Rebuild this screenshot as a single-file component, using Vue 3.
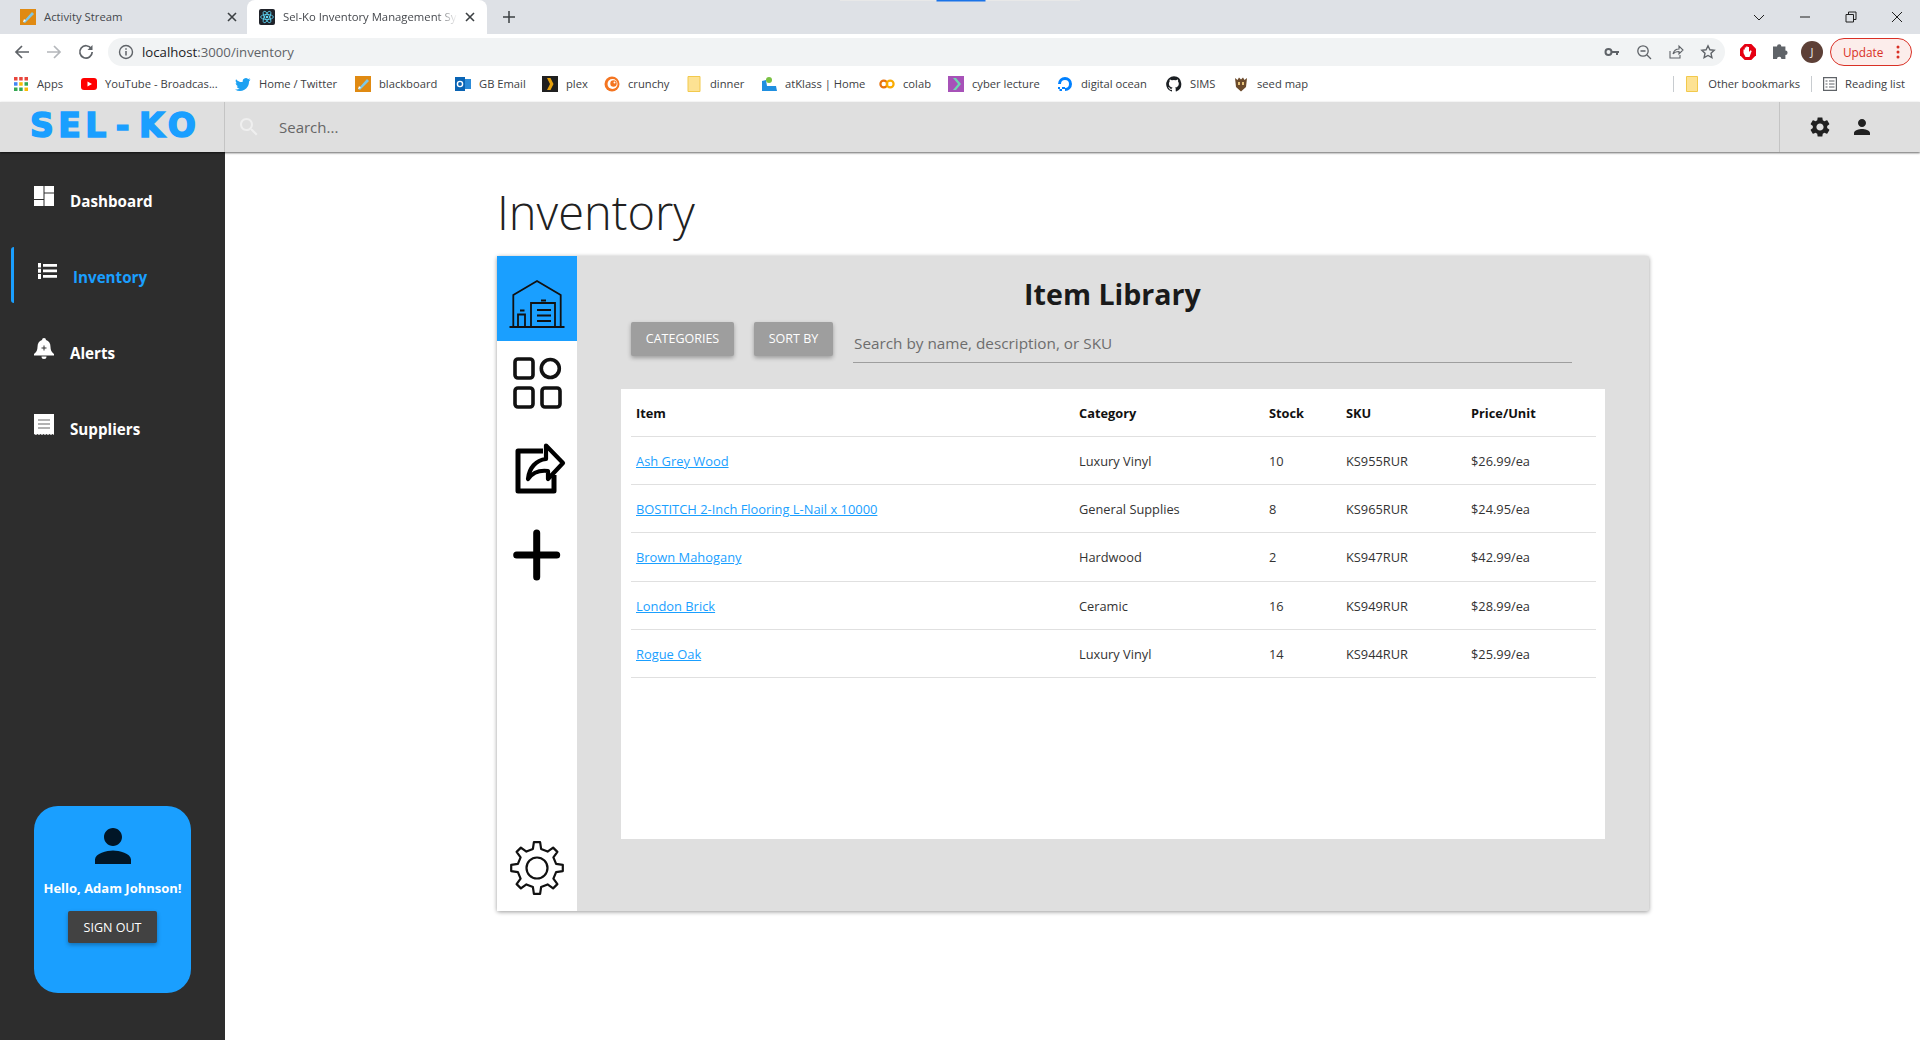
<template>
  <div class="page">
    <!-- browser chrome -->
    <div class="tabstrip">
      <div class="load-track"><div class="load-bar"></div></div>
      <div class="tab">
        <svg class="fav" viewBox="0 0 16 16"><rect width="16" height="16" fill="#e08a12"/><path d="M3 13 12 3l2 2-9 9z" fill="#7ec8e8"/><path d="M3 13l1-3 2 2z" fill="#fff"/></svg>
        <span class="tab-title">Activity Stream</span>
        <svg class="tab-x" viewBox="0 0 10 10"><path d="M1 1l8 8M9 1l-8 8"/></svg>
      </div>
      <div class="tab active">
        <svg class="fav" viewBox="0 0 16 16"><rect width="16" height="16" rx="2" fill="#20232a"/><g fill="none" stroke="#61dafb" stroke-width=".8"><ellipse cx="8" cy="8" rx="6.4" ry="2.5"/><ellipse cx="8" cy="8" rx="6.4" ry="2.5" transform="rotate(60 8 8)"/><ellipse cx="8" cy="8" rx="6.4" ry="2.5" transform="rotate(120 8 8)"/></g><circle cx="8" cy="8" r="1.3" fill="#61dafb"/></svg>
        <span class="tab-title fade">Sel-Ko Inventory Management Sy</span>
        <svg class="tab-x" viewBox="0 0 10 10"><path d="M1 1l8 8M9 1l-8 8"/></svg>
      </div>
      <svg class="newtab" viewBox="0 0 12 12"><path d="M6 0v12M0 6h12"/></svg>
      <div class="winctl">
        <svg viewBox="0 0 12 12" width="12" height="12"><path d="M1 4l5 5 5-5"/></svg>
        <svg viewBox="0 0 12 12" width="12" height="12"><path d="M1 6h10"/></svg>
        <svg viewBox="0 0 12 12" width="12" height="12"><path d="M1 3.5h7.5V11H1zM3.5 3.500V1H11v7.500H8.500"/></svg>
        <svg viewBox="0 0 12 12" width="12" height="12"><path d="M1 1l10 10M11 1 1 11"/></svg>
      </div>
    </div>
    <div class="toolbar">
      <svg class="nav-ic" viewBox="0 0 16 16"><path d="M15 8H2M8 2 2 8l6 6" fill="none" stroke="#5f6368" stroke-width="1.700"/></svg>
      <svg class="nav-ic" viewBox="0 0 16 16"><path d="M1 8h13M8 2l6 6-6 6" fill="none" stroke="#b4b7bb" stroke-width="1.700"/></svg>
      <svg class="nav-ic" viewBox="0 0 16 16"><path d="M13.300 4.700A6.200 6.200 0 1 0 14.200 8" fill="none" stroke="#5f6368" stroke-width="1.700"/><path d="M14.500 1v5h-5z" fill="#5f6368"/></svg>
      <div class="omnibox">
        <svg class="info" viewBox="0 0 16 16"><circle cx="8" cy="8" r="6.500" fill="none" stroke="#5f6368" stroke-width="1.400"/><path d="M8 7v4.500M8 4.300v1.500" stroke="#5f6368" stroke-width="1.500"/></svg>
        <span class="url"><b>localhost</b>:3000/inventory</span>
        <div class="omni-icons">
          <svg viewBox="0 0 16 16"><circle cx="4.500" cy="8" r="3" fill="none" stroke="#5f6368" stroke-width="2"/><path d="M7 7h8v2h-1v2h-2V9H7z" fill="#5f6368"/></svg>
          <svg viewBox="0 0 16 16"><circle cx="7" cy="7" r="5.200" fill="none" stroke="#5f6368" stroke-width="1.300"/><path d="M4.500 7h5M11 11l4 4" stroke="#5f6368" stroke-width="1.300"/></svg>
          <svg viewBox="0 0 16 16"><path d="M2 7v7h10v-3M5 10c1-4 4-5 6-5V2l4 4-4 4V7.500C8 7.500 6.500 8 5 10z" fill="none" stroke="#5f6368" stroke-width="1.100"/></svg>
          <svg viewBox="0 0 16 16"><path d="m8 1.800 1.900 4 4.300.5-3.200 3 .9 4.300L8 11.500l-3.900 2.100.9-4.300-3.200-3 4.300-.5z" fill="none" stroke="#5f6368" stroke-width="1.400"/></svg>
        </div>
      </div>
      <div class="ext-icons">
        <svg viewBox="0 0 18 18"><path d="M5.700 1h6.600L17 5.700v6.600L12.300 17H5.700L1 12.300V5.700z" fill="#e60012"/><path d="M4.500 10V6.500h1.300v2.500V4.500h1.400V8V3.500h1.400V8V4h1.400v5l1.500-1.800 1.200.7-2.200 6.100H6.500z" fill="#fff"/></svg>
        <svg viewBox="0 0 18 18"><path d="M1 5h4a2.200 2.200 0 0 1 4.400 0h4v4a2.200 2.200 0 0 1 0 4.400v4h-4a2.200 2.200 0 0 0-4.400 0H1z" fill="#5f6368" transform="translate(1 -1.500)"/></svg>
        <div class="avatar">J</div>
      </div>
      <div class="update">
        <span>Update</span>
        <svg viewBox="0 0 4 16" width="4" height="16"><circle cx="2" cy="3" r="1.500"/><circle cx="2" cy="8" r="1.500"/><circle cx="2" cy="13" r="1.500"/></svg>
      </div>
    </div>
    <div class="bookmarks">
      <div v-for="b in bookmarks" :key="b.name" class="bm" :style="{ width: b.w + 'px' }">
        <svg class="bm-ic" viewBox="0 0 16 16" v-html="b.icon"></svg>
        <span>{{ b.name }}</span>
      </div>
      <div class="bm-right">
        <i class="sep"></i>
        <svg class="bm-ic small" viewBox="0 0 12 16"><path d="M.5.500h11v15H.5z" fill="#fde293" stroke="#f2c94c"/></svg>
        <span class="other">Other bookmarks</span>
        <i class="sep"></i>
        <svg class="bm-ic list" viewBox="0 0 14 14"><path d="M.6.600h12.800v12.800H.6zM2.500 4h2M6 4h5.500M2.500 7h2M6 7h5.500M2.500 10h2M6 10h5.500" fill="none" stroke="#5f6368" stroke-width="1.200"/></svg>
        <span>Reading list</span>
      </div>
    </div>

    <!-- app bar -->
    <header class="appbar">
      <div class="logo">SEL<span class="dash">-</span>KO</div>
      <div class="searchbar">
        <svg viewBox="0 0 24 24" width="24" height="24"><path fill="#efefef" :d="searchPath"/></svg>
        <span>Search...</span>
      </div>
      <div class="bar-actions">
        <svg viewBox="0 0 24 24" width="24" height="24"><path fill="#212121" :d="gearPath"/></svg>
        <svg viewBox="0 0 24 24" width="24" height="24"><path fill="#212121" :d="personPath"/></svg>
      </div>
    </header>

    <div class="body">
      <aside class="sidebar">
        <nav class="nav">
          <a v-for="n in navItems" :key="n.label" class="nav-item" :class="{ on: n.active }">
            <svg class="nav-svg" viewBox="0 0 20 22" v-html="n.icon"></svg>
            <span>{{ n.label }}</span>
          </a>
        </nav>
        <div class="profile">
          <svg viewBox="0 0 24 24" width="54" height="54"><path fill="#011627" :d="personPath"/></svg>
          <div class="hello">Hello, Adam Johnson!</div>
          <button class="signout">SIGN OUT</button>
        </div>
      </aside>

      <main class="main">
        <h1 class="title">Inventory</h1>
        <section class="panel">
          <div class="rail">
            <div class="rail-item current">
              <svg viewBox="0 0 80 85" fill="none" stroke="#111" stroke-width="1.800">
                <path d="M16.300 71V39L40 25l23.700 14v32M12.500 71h55M34 71V47h24v24M21 71V58.500h7V71M40 54h14M40 59.500h14M40 65h14"/>
                <path d="M23 54.500h4.500M44 44.500h5" stroke-width="2"/>
              </svg>
            </div>
            <div class="rail-item">
              <svg viewBox="0 0 80 85" fill="none" stroke="#111" stroke-width="3.600">
                <rect x="18" y="18" width="18" height="19" rx="3"/>
                <circle cx="53.300" cy="27.500" r="9"/>
                <rect x="18" y="47" width="18" height="19" rx="3"/>
                <rect x="45" y="47" width="18" height="19" rx="3"/>
              </svg>
            </div>
            <div class="rail-item">
              <svg viewBox="0 2 80 85" fill="none" stroke="#000" stroke-linejoin="round">
                <path d="M46 27H21v40h36V51" stroke-width="5"/>
                <path d="M49 21.500 66 39 51 55V47c-8-1-15 1-20 8 1-11 8-19 18-20z" stroke-width="4.200" fill="#fff"/>
              </svg>
            </div>
            <div class="rail-item">
              <svg viewBox="0 0 80 85" stroke="#000" stroke-width="7" stroke-linecap="round"><path d="M39.700 22v44M19.700 44h40"/></svg>
            </div>
            <div class="rail-gear">
              <svg viewBox="0 0 60 60" width="60" height="60" fill="none" stroke="#111" stroke-width="2.200" stroke-linejoin="round">
                <path :d="railGear"/>
                <circle cx="30" cy="30" r="10.500"/>
              </svg>
            </div>
          </div>
          <div class="content">
            <h2 class="lib-title">Item Library</h2>
            <div class="filters">
              <button class="filter wide">CATEGORIES</button>
              <button class="filter">SORT BY</button>
              <div class="find">Search by name, description, or SKU</div>
            </div>
            <div class="sheet">
              <table>
                <colgroup><col class="c1"><col class="c2"><col class="c3"><col class="c4"><col class="c5"></colgroup>
                <thead>
                  <tr><th>Item</th><th>Category</th><th>Stock</th><th>SKU</th><th>Price/Unit</th></tr>
                </thead>
                <tbody>
                  <tr v-for="r in rows" :key="r.sku">
                    <td><a class="link">{{ r.name }}</a></td>
                    <td>{{ r.cat }}</td>
                    <td>{{ r.stock }}</td>
                    <td>{{ r.sku }}</td>
                    <td>{{ r.price }}</td>
                  </tr>
                </tbody>
              </table>
            </div>
          </div>
        </section>
      </main>
    </div>
  </div>
</template>

<script setup>
const searchPath = 'M15.5 14h-.79l-.28-.27C15.41 12.59 16 11.11 16 9.5 16 5.91 13.09 3 9.5 3S3 5.91 3 9.5 5.91 16 9.5 16c1.61 0 3.09-.59 4.23-1.57l.27.28v.79l5 4.99L20.49 19l-4.99-5zm-6 0C7.01 14 5 11.99 5 9.5S7.01 5 9.5 5 14 7.01 14 9.5 11.99 14 9.5 14z'
const gearPath = 'M19.14 12.94c.04-.3.06-.61.06-.94 0-.32-.02-.64-.07-.94l2.03-1.58c.18-.14.23-.41.12-.61l-1.92-3.32c-.12-.22-.37-.29-.59-.22l-2.39.96c-.5-.38-1.03-.7-1.62-.94l-.36-2.54c-.04-.24-.24-.41-.48-.41h-3.84c-.24 0-.43.17-.47.41l-.36 2.54c-.59.24-1.13.57-1.62.94l-2.39-.96c-.22-.08-.47 0-.59.22L2.74 8.87c-.12.21-.08.47.12.61l2.03 1.58c-.05.3-.09.63-.09.94s.02.64.07.94l-2.03 1.58c-.18.14-.23.41-.12.61l1.92 3.32c.12.22.37.29.59.22l2.39-.96c.5.38 1.03.7 1.62.94l.36 2.54c.05.24.24.41.48.41h3.84c.24 0 .44-.17.47-.41l.36-2.54c.59-.24 1.13-.56 1.62-.94l2.39.96c.22.08.47 0 .59-.22l1.92-3.32c.12-.22.07-.47-.12-.61l-2.01-1.58zM12 15.6c-1.98 0-3.6-1.62-3.6-3.6s1.62-3.6 3.6-3.6 3.6 1.62 3.6 3.6-1.62 3.6-3.6 3.6z'
const personPath = 'M12 12c2.21 0 4-1.79 4-4s-1.790-4-4-4-4 1.790-4 4 1.790 4 4 4zm0 2c-2.670 0-8 1.340-8 4v2h16v-2c0-2.660-5.330-4-8-4z'

// outline gear for the bottom of the rail, 8 teeth
function makeGear(cx, cy, outer, root, teeth) {
  const pts = []
  const step = (Math.PI * 2) / teeth
  for (let i = 0; i < teeth; i++) {
    const a = i * step - Math.PI / 2
    const p = (r, d) => {
      const x = cx + r * Math.cos(a + d * step)
      const y = cy + r * Math.sin(a + d * step)
      return x.toFixed(1) + ' ' + y.toFixed(1)
    }
    pts.push(p(root, -0.27), p(outer, -0.15), p(outer, 0.15), p(root, 0.27))
  }
  return 'M' + pts.join('L') + 'Z'
}
const railGear = makeGear(30, 30, 26, 19.5, 8)

const folder = '<path d="M2 .5h12v15H2z" fill="#fde293" stroke="#f2c94c"/>'
const pencil = '<rect width="16" height="16" fill="#e08a12"/><path d="M3 13 12 3l2 2-9 9z" fill="#7ec8e8"/><path d="M3 13l1-3 2 2z" fill="#fff"/>'
const bookmarks = [
  { name: 'Apps', w: 68, icon: '<g fill="#e8453c"><rect x="1" y="1" width="3.500" height="3.500"/><rect x="6.200" y="1" width="3.500" height="3.500"/><rect x="11.500" y="1" width="3.500" height="3.500"/></g><g fill="#4285f4"><rect x="1" y="6.200" width="3.500" height="3.500"/></g><g fill="#fbbc05"><rect x="6.200" y="6.200" width="3.500" height="3.500"/><rect x="11.500" y="11.500" width="3.500" height="3.500"/></g><g fill="#34a853"><rect x="11.500" y="6.200" width="3.500" height="3.500"/><rect x="1" y="11.500" width="3.500" height="3.500"/><rect x="6.200" y="11.500" width="3.500" height="3.500"/></g>' },
  { name: 'YouTube - Broadcas...', w: 154, icon: '<rect y="2" width="16" height="12" rx="3" fill="#f00"/><path d="M6.500 5.500 11 8l-4.500 2.500z" fill="#fff"/>' },
  { name: 'Home / Twitter', w: 120, icon: '<path d="M15.500 3.500c-.6.300-1.200.400-1.800.5.600-.400 1.100-1 1.400-1.700-.6.400-1.300.600-2 .8a3.200 3.200 0 0 0-5.400 2.900C5 6.400 2.700 5.100 1.100 3.200c-.9 1.500-.4 3.300 1 4.300-.5 0-1-.2-1.400-.4 0 1.500 1.100 2.900 2.600 3.200-.5.100-1 .200-1.500.100.400 1.300 1.600 2.200 3 2.200A6.500 6.500 0 0 1 0 13.400 9 9 0 0 0 14 5.500c.6-.5 1.100-1.200 1.500-2z" fill="#1da1f2"/>' },
  { name: 'blackboard', w: 100, icon: pencil },
  { name: 'GB Email', w: 87, icon: '<rect x="5" y="3" width="11" height="10" fill="#2c8bd8"/><rect y="1" width="10" height="14" fill="#0a64b4"/><circle cx="5" cy="8" r="2.600" fill="none" stroke="#fff" stroke-width="1.400"/>' },
  { name: 'plex', w: 62, icon: '<rect width="16" height="16" fill="#1f1f1f"/><path d="M5 2h3.500l3 6-3 6H5l3-6z" fill="#e5a00d"/>' },
  { name: 'crunchy', w: 82, icon: '<circle cx="8" cy="8" r="7.500" fill="#f47521"/><circle cx="8.500" cy="8" r="5" fill="#fff"/><circle cx="9.500" cy="7.500" r="3.200" fill="#f47521"/><circle cx="10.500" cy="6.500" r="1" fill="#fff"/>' },
  { name: 'dinner', w: 75, icon: folder },
  { name: 'atKlass | Home', w: 118, icon: '<path d="M1 15V5l4-1 1 6h9l1 5z" fill="#1f8fe0"/><circle cx="8" cy="4" r="3" fill="#7ac143"/>' },
  { name: 'colab', w: 69, icon: '<circle cx="4.800" cy="8" r="3.400" fill="none" stroke="#e8710a" stroke-width="2.200"/><circle cx="11.200" cy="8" r="3.400" fill="none" stroke="#f9ab00" stroke-width="2.200"/>' },
  { name: 'cyber lecture', w: 109, icon: '<rect width="16" height="16" fill="#a752b8"/><path d="M5 2l5 6-5 6h3l5-6-5-6z" fill="#6fd6b0"/>' },
  { name: 'digital ocean', w: 109, icon: '<path d="M8 15V12a4 4 0 1 0-4-4H1a7 7 0 1 1 7 7z" fill="#0080ff"/><path d="M5 11h3v2H5zM2.500 13H5v2H2.500zM1 11h2v2H1z" fill="#0080ff"/>' },
  { name: 'SIMS', w: 67, icon: '<path d="M8 .3a7.800 7.800 0 0 0-2.500 15.200c.4.100.5-.2.500-.4v-1.300c-2.200.5-2.700-1-2.700-1-.4-.9-.9-1.200-.9-1.200-.7-.5.100-.5.100-.5.800.1 1.200.8 1.200.8.700 1.200 1.800.9 2.300.7 0-.5.300-.9.500-1.100-1.700-.2-3.600-.9-3.600-3.900 0-.8.300-1.500.8-2-.1-.2-.3-1 .1-2.100 0 0 .6-.2 2.100.8a7.500 7.500 0 0 1 3.900 0c1.500-1 2.100-.8 2.100-.8.400 1.100.2 1.900.1 2.100.5.5.8 1.200.8 2 0 3-1.800 3.700-3.600 3.900.3.300.5.700.5 1.400v2.100c0 .2.100.5.500.4A7.800 7.800 0 0 0 8 .3z" fill="#1b1f23"/>' },
  { name: 'seed map', w: 90, icon: '<path d="M2 2l2.500 2L6 1.500 8 3.500l2-2L11.500 4 14 2l-1 9-5 4.500L3 11z" fill="#6b4a2b"/><path d="M5 6h2v3H5zM9 6h2v3H9z" fill="#e6c27a"/>' }
]

const navItems = [
  { label: 'Dashboard', icon: '<path fill="#fff" d="M0 0h9.500v13H0zM0 14h9.500v6H0zM10.500 0H20v6.500h-9.500zM10.500 7.500H20V20h-9.500z"/>' },
  { label: 'Inventory', active: true, icon: '<path fill="#fff" d="M1 1h3v4.500H1zM1 6.800h3v4H1zM1 12h3v5H1zM6 2h14v2.800H6zM6 7.500h14v2.800H6zM6 13h14v2.800H6z"/>' },
  { label: 'Alerts', icon: '<path fill="#fff" d="M10 0a2 2 0 0 1 2 2c3 1 4.500 3.500 4.500 7 0 3 1 5 3.500 7v1.500H0V16c2.500-2 3.500-4 3.500-7 0-3.500 1.500-6 4.500-7a2 2 0 0 1 2-2zM7.500 18.500h5a2.500 2.500 0 0 1-5 0z"/><path d="M10 7.500v5M7.500 10h5" stroke="#333" stroke-width="1"/>' },
  { label: 'Suppliers', icon: '<path fill="#fff" d="M0 0h20v21l-1.500-1-1.500 1-1.500-1-1.500 1-1.500-1-1.500 1-1.500-1L8 21l-1.500-1L5 21l-1.500-1L2 21l-2-1z"/><path d="M4 6h12M4 10h12M4 14h12" stroke="#666" stroke-width="1.200"/>' }
]

const rows = [
  { name: 'Ash Grey Wood', cat: 'Luxury Vinyl', stock: 10, sku: 'KS955RUR', price: '$26.99/ea' },
  { name: 'BOSTITCH 2-Inch Flooring L-Nail x 10000', cat: 'General Supplies', stock: 8, sku: 'KS965RUR', price: '$24.95/ea' },
  { name: 'Brown Mahogany', cat: 'Hardwood', stock: 2, sku: 'KS947RUR', price: '$42.99/ea' },
  { name: 'London Brick', cat: 'Ceramic', stock: 16, sku: 'KS949RUR', price: '$28.99/ea' },
  { name: 'Rogue Oak', cat: 'Luxury Vinyl', stock: 14, sku: 'KS944RUR', price: '$25.99/ea' }
]
</script>

<style>
html, body { margin: 0; height: 100%; overflow: hidden; background: #fff; }
</style>

<style scoped>
.page {
  width: 1920px;
  height: 1040px;
  display: flex;
  flex-direction: column;
  font-family: "Open Sans", "Noto Sans", sans-serif;
  color: #212121;
  overflow: hidden;
}

/* chrome */
.tabstrip {
  height: 34px;
  flex: none;
  background: #dee1e6;
  display: flex;
  align-items: stretch;
  position: relative;
  font-size: 12px;
  color: #45484d;
}
.load-track { position: absolute; top: 0; left: 840px; width: 240px; height: 1px; background: #e8e8e8; }
.load-bar { width: 48px; height: 1px; margin-left: 97px; background: #1a73e8; box-shadow: 0 0 0 .5px #1a73e8; }
.tab {
  width: 240px;
  margin-left: 7px;
  padding-left: 13px;
  box-sizing: border-box;
  display: flex;
  align-items: center;
}
.tab .tab-x { margin-right: 10px; }
.tab.active { background: #fff; border-radius: 8px 8px 0 0; margin-left: 0; padding-left: 12px; }
.tab.active .tab-x { margin-right: 12px; }
.tab-title { width: 178px; margin-left: 8px; white-space: nowrap; font-size: 11.300px; padding-bottom: 1px; }
.fade { -webkit-mask-image: linear-gradient(90deg, #000 86%, transparent 98%); mask-image: linear-gradient(90deg, #000 86%, transparent 98%); }
.fav { width: 16px; height: 16px; flex: none; }
.tab-x { width: 10px; height: 10px; margin-left: auto; fill: none; stroke: #3c4043; stroke-width: 1.600; }
.newtab { width: 12px; height: 12px; align-self: center; margin-left: 16px; fill: none; stroke: #3c4043; stroke-width: 1.500; }
.winctl { margin-left: auto; display: flex; align-items: center; gap: 34px; padding-right: 17px; }
.winctl svg { fill: none; stroke: #1f1f1f; stroke-width: 1; }

.toolbar {
  height: 32px;
  flex: none;
  background: #fff;
  display: flex;
  align-items: flex-start;
  padding: 4px 8px 0 14px;
  box-sizing: border-box;
}
.nav-ic { width: 16px; height: 16px; margin: 6px 16px 0 0; flex: none; }
.omnibox {
  width: 1617px;
  height: 28px;
  margin-left: -2px;
  background: #f1f3f4;
  border-radius: 14px;
  display: flex;
  align-items: center;
  flex: none;
  font-size: 13.200px;
  color: #5f6368;
}
.info { width: 16px; height: 16px; margin: 0 8px 0 10px; }
.url { white-space: nowrap; }
.url b { font-weight: 400; color: #202124; }
.omni-icons { margin-left: auto; display: flex; gap: 16px; padding-right: 9px; }
.omni-icons svg { width: 16px; height: 16px; }
.ext-icons { display: flex; align-items: center; height: 28px; margin-left: 14px; gap: 14px; }
.ext-icons svg { width: 18px; height: 18px; }
.avatar {
  width: 22px;
  height: 22px;
  margin-left: -2px;
  border-radius: 50%;
  background: #5d4037;
  color: #eee;
  font-size: 11px;
  line-height: 22px;
  text-align: center;
}
.update {
  width: 82px;
  height: 28px;
  box-sizing: border-box;
  margin-left: 7px;
  border: 1px solid #d93025;
  border-radius: 14px;
  background: #fcedeb;
  color: #d93025;
  font-size: 11.800px;
  display: flex;
  align-items: center;
  padding: 0 11px 0 12px;
  justify-content: space-between;
}
.update svg { fill: #d93025; }

.bookmarks {
  height: 36px;
  flex: none;
  background: #fff;
  display: flex;
  align-items: center;
  padding-left: 13px;
  padding-bottom: 1px;
  box-sizing: border-box;
  font-size: 11.200px;
  color: #3c4043;
}
.bm { display: flex; align-items: center; gap: 8px; flex: none; white-space: nowrap; }
.bm-ic { width: 16px; height: 16px; flex: none; }
.bm-right { margin-left: auto; display: flex; align-items: center; padding-right: 15px; }
.sep { width: 1px; height: 16px; background: #c8ccd0; }
.small { width: 12px; margin-left: 12px; margin-right: 10px; }
.other { margin-right: 11px; }
.list { width: 14px; height: 14px; margin: 0 8px 0 11px; }

/* app bar */
.appbar {
  height: 50px;
  flex: none;
  background: #dfdfdf;
  display: flex;
  box-shadow: 0 1px 2px rgba(0, 0, 0, .6);
  position: relative;
  z-index: 2;
}
.logo {
  width: 225px;
  box-sizing: border-box;
  padding-left: 30px;
  font-family: "DejaVu Sans", sans-serif;
  font-weight: 700;
  font-size: 33px;
  line-height: 48px;
  letter-spacing: 4.500px;
  color: #1a9fff;
  -webkit-text-stroke: 1.600px #1a9fff;
  border-right: 1px solid #c4c4c4;
  white-space: nowrap;
  overflow: hidden;
}
.dash { margin: 0 5px; }
.searchbar {
  flex: 1;
  display: flex;
  align-items: center;
  padding-left: 12px;
  font-size: 15px;
  color: #666;
  gap: 18px;
}
.bar-actions {
  width: 141px;
  box-sizing: border-box;
  border-left: 1px solid #c4c4c4;
  display: flex;
  align-items: center;
  padding-left: 28px;
  gap: 18px;
}

/* layout */
.body { flex: 1; display: flex; min-height: 0; }
.sidebar {
  width: 225px;
  flex: none;
  background: #2d2d2d;
  display: flex;
  flex-direction: column;
}
.nav { padding-top: 19px; display: flex; flex-direction: column; gap: 20px; }
.nav-item {
  height: 56px;
  margin-left: 11px;
  padding-left: 23px;
  box-sizing: border-box;
  display: flex;
  align-items: flex-start;
  gap: 16px;
  color: #fff;
  font-weight: 700;
  font-size: 15.200px;
  line-height: 22px;
}
.nav-item span { margin-top: 19px; }
.nav-item.on {
  color: #1a9fff;
  border-left: 3px solid #1a9fff;
  border-radius: 3px;
}
.nav-svg { width: 20px; height: 22px; margin-top: 15px; flex: none; }
.profile {
  margin: auto 0 47px 34px;
  width: 157px;
  height: 187px;
  box-sizing: border-box;
  padding-top: 13px;
  border-radius: 24px;
  background: #1a9fff;
  display: flex;
  flex-direction: column;
  align-items: center;
}
.hello { margin-top: 5px; color: #fff; font-weight: 700; font-size: 13px; line-height: 20px; white-space: nowrap; }
.signout {
  margin-top: 13px;
  width: 89px;
  height: 32px;
  border: none;
  border-radius: 2px;
  background: #424242;
  color: #fff;
  font-family: inherit;
  font-size: 12.500px;
  box-shadow: 0 2px 4px rgba(0, 0, 0, .3);
}

.main { flex: 1; padding: 28px 0 0 272px; }
.title {
  margin: 0 0 12px;
  font-size: 47px;
  font-weight: 300;
  line-height: 64px;
  color: #212121;
}
.panel {
  width: 1152px;
  height: 655px;
  display: flex;
  background: #dfdfdf;
  box-shadow: 0 1px 4px rgba(0, 0, 0, .4);
  border-radius: 2px;
}
.rail { width: 80px; flex: none; background: #fff; display: flex; flex-direction: column; }
.rail-item { height: 85px; flex: none; }
.rail-item svg { display: block; width: 80px; height: 85px; }
.current { background: #1a9fff; }
.rail-gear { margin-top: auto; height: 73px; display: flex; justify-content: center; }

.content { flex: 1; padding-left: 44px; }
.lib-title {
  margin: 0;
  padding-right: 45px;
  height: 66px;
  text-align: center;
  font-size: 28.600px;
  font-weight: 700;
  line-height: 76px;
  color: #1a1a1a;
}
.filters { display: flex; margin-left: 10px; height: 67px; align-items: flex-start; }
.filter {
  width: 79px;
  height: 34px;
  padding: 0 0 2px;
  border: none;
  border-radius: 2px;
  background: #9e9e9e;
  color: #fff;
  font-family: inherit;
  font-size: 12.500px;
  margin-right: 20px;
  box-shadow: 0 2px 4px rgba(0, 0, 0, .3);
}
.wide { width: 103px; }
.find {
  width: 719px;
  height: 41px;
  box-sizing: border-box;
  border-bottom: 1px solid #9e9e9e;
  font-size: 15.300px;
  line-height: 43px;
  padding-left: 1px;
  color: #6d6d6d;
}
.sheet { width: 984px; height: 450px; background: #fff; padding: 0 9px 0 10px; box-sizing: border-box; }
table { width: 965px; table-layout: fixed; border-collapse: collapse; font-size: 12.800px; }
.c1 { width: 443px; }
.c2 { width: 190px; }
.c3 { width: 77px; }
.c4 { width: 125px; }
.c5 { width: 130px; }
th, td {
  padding: 0 0 0 5px;
  box-sizing: border-box;
  text-align: left;
  border-bottom: 1px solid #e0e0e0;
  white-space: nowrap;
}
th { height: 47.500px; font-weight: 700; color: #111; }
td { height: 48.200px; padding-top: 1px; color: #333; }
.link { color: #1a9fff; text-decoration: underline; font-size: 12.900px; }
</style>
